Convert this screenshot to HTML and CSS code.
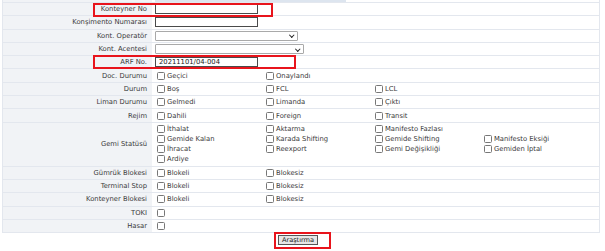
FILE: index.html
```html
<!DOCTYPE html>
<html lang="tr">
<head>
    <meta charset="UTF-8">
    <title>Konteyner Arama</title>
    <link rel="stylesheet" href="styles.css">
</head>
<body>
    <div class="page">
        <div class="form">
            <div class="row top"><div class="lbl"></div><div class="val"><span class="topbar"></span></div></div>
            <div class="row"><div class="lbl">Konteyner No</div><div class="val"><input class="txt" type="text"></div></div>
            <div class="row"><div class="lbl">Konşimento Numarası</div><div class="val"><input class="txt" type="text"></div></div>
            <div class="row"><div class="lbl">Kont. Operatör</div><div class="val"><span class="sel w1"></span></div></div>
            <div class="row"><div class="lbl">Kont. Acentesi</div><div class="val"><span class="sel w2"></span></div></div>
            <div class="row"><div class="lbl">ARF No.</div><div class="val"><input class="txt" type="text" value="20211101/04-004"></div></div>
            <div class="row"><div class="lbl">Doc. Durumu</div><div class="val opts"><label><i></i>Geçici</label><label><i></i>Onaylandı</label></div></div>
            <div class="row"><div class="lbl">Durum</div><div class="val opts"><label><i></i>Boş</label><label><i></i>FCL</label><label><i></i>LCL</label></div></div>
            <div class="row"><div class="lbl">Liman Durumu</div><div class="val opts"><label><i></i>Gelmedi</label><label><i></i>Limanda</label><label><i></i>Çıktı</label></div></div>
            <div class="row"><div class="lbl">Rejim</div><div class="val opts"><label><i></i>Dahili</label><label><i></i>Foreign</label><label><i></i>Transit</label></div></div>
            <div class="row tall"><div class="lbl">Gemi Statüsü</div>
                <div class="val opts multi">
                    <label><i></i>İthalat</label><label><i></i>Aktarma</label><label><i></i>Manifesto Fazlası</label><span></span>
                    <label><i></i>Gemide Kalan</label><label><i></i>Karada Shifting</label><label><i></i>Gemide Shifting</label><label><i></i>Manifesto Eksiği</label>
                    <label><i></i>İhracat</label><label><i></i>Reexport</label><label><i></i>Gemi Değişikliği</label><label><i></i>Gemiden İptal</label>
                    <label><i></i>Ardiye</label>
                </div>
            </div>
            <div class="row"><div class="lbl">Gümrük Blokesi</div><div class="val opts"><label><i></i>Blokeli</label><label><i></i>Blokesiz</label></div></div>
            <div class="row"><div class="lbl">Terminal Stop</div><div class="val opts"><label><i></i>Blokeli</label><label><i></i>Blokesiz</label></div></div>
            <div class="row"><div class="lbl">Konteyner Blokesi</div><div class="val opts"><label><i></i>Blokeli</label><label><i></i>Blokesiz</label></div></div>
            <div class="row"><div class="lbl">TOKI</div><div class="val opts"><label><i></i></label></div></div>
            <div class="row"><div class="lbl">Hasar</div><div class="val opts"><label><i></i></label></div></div>
        </div>
        <div class="actions"><button class="btn">Araştırma</button></div>

        <!-- işaretlemeler -->
        <div class="mark m1"></div>
        <div class="mark m2"></div>
        <div class="mark m3"></div>
    </div>
</body>
</html>
```

FILE: styles.css
```css
/* genel */
body {
    margin: 0;
    background: #ffffff;
    font-family: "DejaVu Sans", Verdana, sans-serif;
    font-size: 6.8px;
    color: #3a3a3a;
}

.page {
    position: relative;
    width: 605px;
    height: 251px;
    overflow: hidden;
}

/* form tablosu */
.form {
    margin-left: 2px;
    width: 596px;
    border-left: 1px solid #e3e7ee;
    border-right: 1px solid #e3e7ee;
}

.row {
    display: grid;
    grid-template-columns: 149px 1fr;
    height: 12.3px;
    border-bottom: 1px solid #e3e7ee;
}

.row.top {
    height: 2px;
}

.row.tall {
    height: 43px;
}

.lbl {
    display: flex;
    align-items: center;
    justify-content: flex-end;
    background: #f1f3f6;
    padding-right: 5px;
    white-space: nowrap;
}

.val {
    display: flex;
    align-items: center;
    padding-left: 3px;
}

.topbar {
    display: block;
    width: 191px;
    height: 2px;
    background: #dde5ef;
    align-self: flex-start;
}

/* girişler */
.txt {
    box-sizing: border-box;
    width: 103px;
    height: 10px;
    margin: 0;
    padding: 0 3px;
    border: 1px solid #4a4a4a;
    font: inherit;
    font-size: 6.8px;
    color: #222;
}

.sel {
    position: relative;
    box-sizing: border-box;
    height: 10px;
    border: 1px solid #a9a9a9;
    border-radius: 1px;
    background: #fff;
}

.sel.w1 { width: 143px; }
.sel.w2 { width: 149px; }

.sel::after {
    content: "";
    position: absolute;
    right: 4px;
    top: 1.5px;
    width: 2.5px;
    height: 2.5px;
    border-right: 1.2px solid #222;
    border-bottom: 1.2px solid #222;
    transform: rotate(45deg);
}

/* seçenekler */
.opts {
    display: grid;
    grid-template-columns: repeat(4, 109px);
    align-content: center;
    padding-left: 5px;
}

.opts.multi {
    row-gap: 1.2px;
    align-content: start;
    padding-top: 1.5px;
}

.opts label {
    display: flex;
    align-items: center;
    height: 9px;
    white-space: nowrap;
}

.opts i {
    box-sizing: border-box;
    width: 8px;
    height: 8px;
    margin-right: 2px;
    border: 1px solid #777;
    border-radius: 1.5px;
    background: #fff;
}

/* buton */
.actions {
    text-align: center;
    padding-top: 2px;
    padding-right: 9px;
}

.btn {
    box-sizing: border-box;
    width: 40px;
    height: 10px;
    padding: 0;
    background: #e6e6e6;
    border: 1px solid #555;
    border-radius: 0;
    font: inherit;
    font-size: 6.6px;
    line-height: 8px;
    color: #222;
}

/* kırmızı çerçeveler */
.mark {
    position: absolute;
    border: 2px solid #e8141c;
    box-sizing: border-box;
}

.m1 { left: 93px; top: 3px; width: 180px; height: 14px; }
.m2 { left: 93px; top: 55px; width: 203px; height: 14px; }
.m3 { left: 274px; top: 232px; width: 57px; height: 17px; }
```
